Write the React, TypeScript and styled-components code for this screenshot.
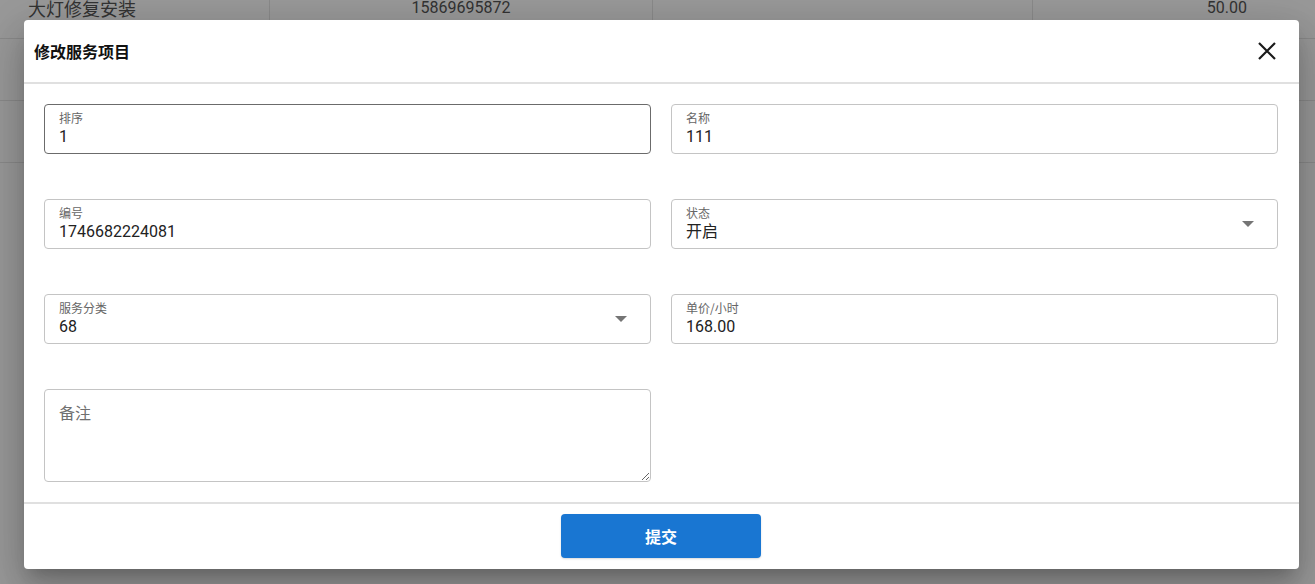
import React from 'react';
import styled, { createGlobalStyle } from 'styled-components';

const GlobalStyle = createGlobalStyle`
  html, body {
    margin: 0;
    padding: 0;
    background: #ffffff;
    font-family: Roboto, "Noto Sans CJK SC", sans-serif;
    overflow: hidden;
  }
  * { box-sizing: border-box; }
`;

const Page = styled.div`
  position: relative;
  width: 1315px;
  height: 584px;
  overflow: hidden;
`;

const Table = styled.div`
  margin-top: -23px;
`;

const Row = styled.div`
  display: grid;
  grid-template-columns: 270px 383px 380px 1fr;
  height: 62px;
  border-bottom: 1px solid #e6e6e6;
`;

const Cell = styled.div<{ $align?: 'left' | 'center' | 'right' }>`
  display: flex;
  align-items: center;
  justify-content: ${(p) =>
    p.$align === 'right' ? 'flex-end' : p.$align === 'center' ? 'center' : 'flex-start'};
  padding: 0 ${(p) => (p.$align === 'right' ? '68px' : '28px')};
  border-right: 1px solid #e6e6e6;
  color: #555;
  font-size: ${(p) => (p.$align === 'left' ? '18px' : '16px')};
  &:last-child { border-right: none; }
`;

const Backdrop = styled.div`
  position: absolute;
  inset: 0;
  background: rgba(0, 0, 0, 0.4);
`;

const Dialog = styled.div`
  position: absolute;
  left: 24px;
  top: 20px;
  width: 1275px;
  height: 549px;
  background: #fff;
  border-radius: 4px;
  box-shadow: 0 11px 15px -7px rgba(0,0,0,0.2), 0 24px 38px 3px rgba(0,0,0,0.14), 0 9px 46px 8px rgba(0,0,0,0.12);
  display: flex;
  flex-direction: column;
`;

const Header = styled.div`
  height: 64px;
  display: flex;
  align-items: center;
  justify-content: space-between;
  padding: 0 12px 0 10px;
  border-bottom: 2px solid #e0e0e0;
  flex-shrink: 0;
`;

const Title = styled.h2`
  margin: 0;
  font-size: 16px;
  font-weight: 700;
  color: #111;
  font-family: "Noto Sans CJK SC", sans-serif;
`;

const CloseButton = styled.button`
  width: 40px;
  height: 40px;
  display: flex;
  align-items: center;
  justify-content: center;
  background: none;
  border: none;
  padding: 0;
  cursor: pointer;
  color: #1a1a1a;
`;

const Body = styled.div`
  padding: 20px 20px 0 20px;
  display: grid;
  grid-template-columns: 607px 607px;
  align-content: start;
  column-gap: 20px;
  row-gap: 45px;
  height: 420px;
  border-bottom: 2px solid #e0e0e0;
  flex-shrink: 0;
`;

const Field = styled.div<{ $focused?: boolean }>`
  position: relative;
  height: 50px;
  border: 1px solid ${(p) => (p.$focused ? '#6b6b6b' : '#c4c4c4')};
  border-radius: 4px;
  padding: 5px 14px 0 14px;
  display: flex;
  flex-direction: column;
`;

const Label = styled.span`
  font-size: 12px;
  line-height: 15px;
  color: #666;
  font-family: "Noto Sans CJK SC", sans-serif;
`;

const Value = styled.span`
  font-size: 16px;
  line-height: 20px;
  margin-top: 2px;
  color: #222;
`;

const Caret = styled.span`
  position: absolute;
  right: 23px;
  top: 21px;
  width: 0;
  height: 0;
  border-left: 6px solid transparent;
  border-right: 6px solid transparent;
  border-top: 6px solid #757575;
`;

const Notes = styled.textarea`
  height: 93px;
  border: 1px solid #c4c4c4;
  border-radius: 4px;
  padding: 10px 14px;
  font-size: 16px;
  line-height: 24px;
  font-family: "Noto Sans CJK SC", sans-serif;
  color: #222;
  resize: vertical;
  outline: none;
  &::placeholder { color: #707070; }
`;

const Footer = styled.div`
  flex: 1;
  display: flex;
  align-items: center;
  justify-content: center;
  padding: 0 1px 2px 0;
`;

const SubmitButton = styled.button`
  width: 200px;
  height: 44px;
  border: none;
  border-radius: 4px;
  background: #1976d2;
  color: #fff;
  font-size: 16px;
  font-weight: 700;
  font-family: "Noto Sans CJK SC", sans-serif;
  box-shadow: 0 1px 2px rgba(0,0,0,0.15);
  cursor: pointer;
`;

type FieldDef = { label: string; value: string; select?: boolean; focused?: boolean };

const fields: FieldDef[] = [
  { label: '排序', value: '1', focused: true },
  { label: '名称', value: '111' },
  { label: '编号', value: '1746682224081' },
  { label: '状态', value: '开启', select: true },
  { label: '服务分类', value: '68', select: true },
  { label: '单价/小时', value: '168.00' },
];

const App: React.FC = () => {
  return (
    <>
      <GlobalStyle />
      <Page>
        <Table>
          <Row>
            <Cell $align="left">大灯修复安装</Cell>
            <Cell $align="center">15869695872</Cell>
            <Cell $align="center"></Cell>
            <Cell $align="right">50.00</Cell>
          </Row>
          <Row>
            <Cell $align="left"></Cell>
            <Cell $align="center"></Cell>
            <Cell $align="center"></Cell>
            <Cell $align="right"></Cell>
          </Row>
          <Row>
            <Cell $align="left"></Cell>
            <Cell $align="center"></Cell>
            <Cell $align="center"></Cell>
            <Cell $align="right"></Cell>
          </Row>
        </Table>
        <Backdrop />
        <Dialog>
          <Header>
            <Title>修改服务项目</Title>
            <CloseButton aria-label="close">
              <svg width="20" height="20" viewBox="0 0 20 20">
                <path d="M2 2 L18 18 M18 2 L2 18" stroke="currentColor" strokeWidth="2.2" fill="none" />
              </svg>
            </CloseButton>
          </Header>
          <Body>
            {fields.map((f) => (
              <Field key={f.label} $focused={f.focused}>
                <Label>{f.label}</Label>
                <Value>{f.value}</Value>
                {f.select && <Caret />}
              </Field>
            ))}
            <Notes placeholder="备注" />
          </Body>
          <Footer>
            <SubmitButton>提交</SubmitButton>
          </Footer>
        </Dialog>
      </Page>
    </>
  );
};

export default App;
